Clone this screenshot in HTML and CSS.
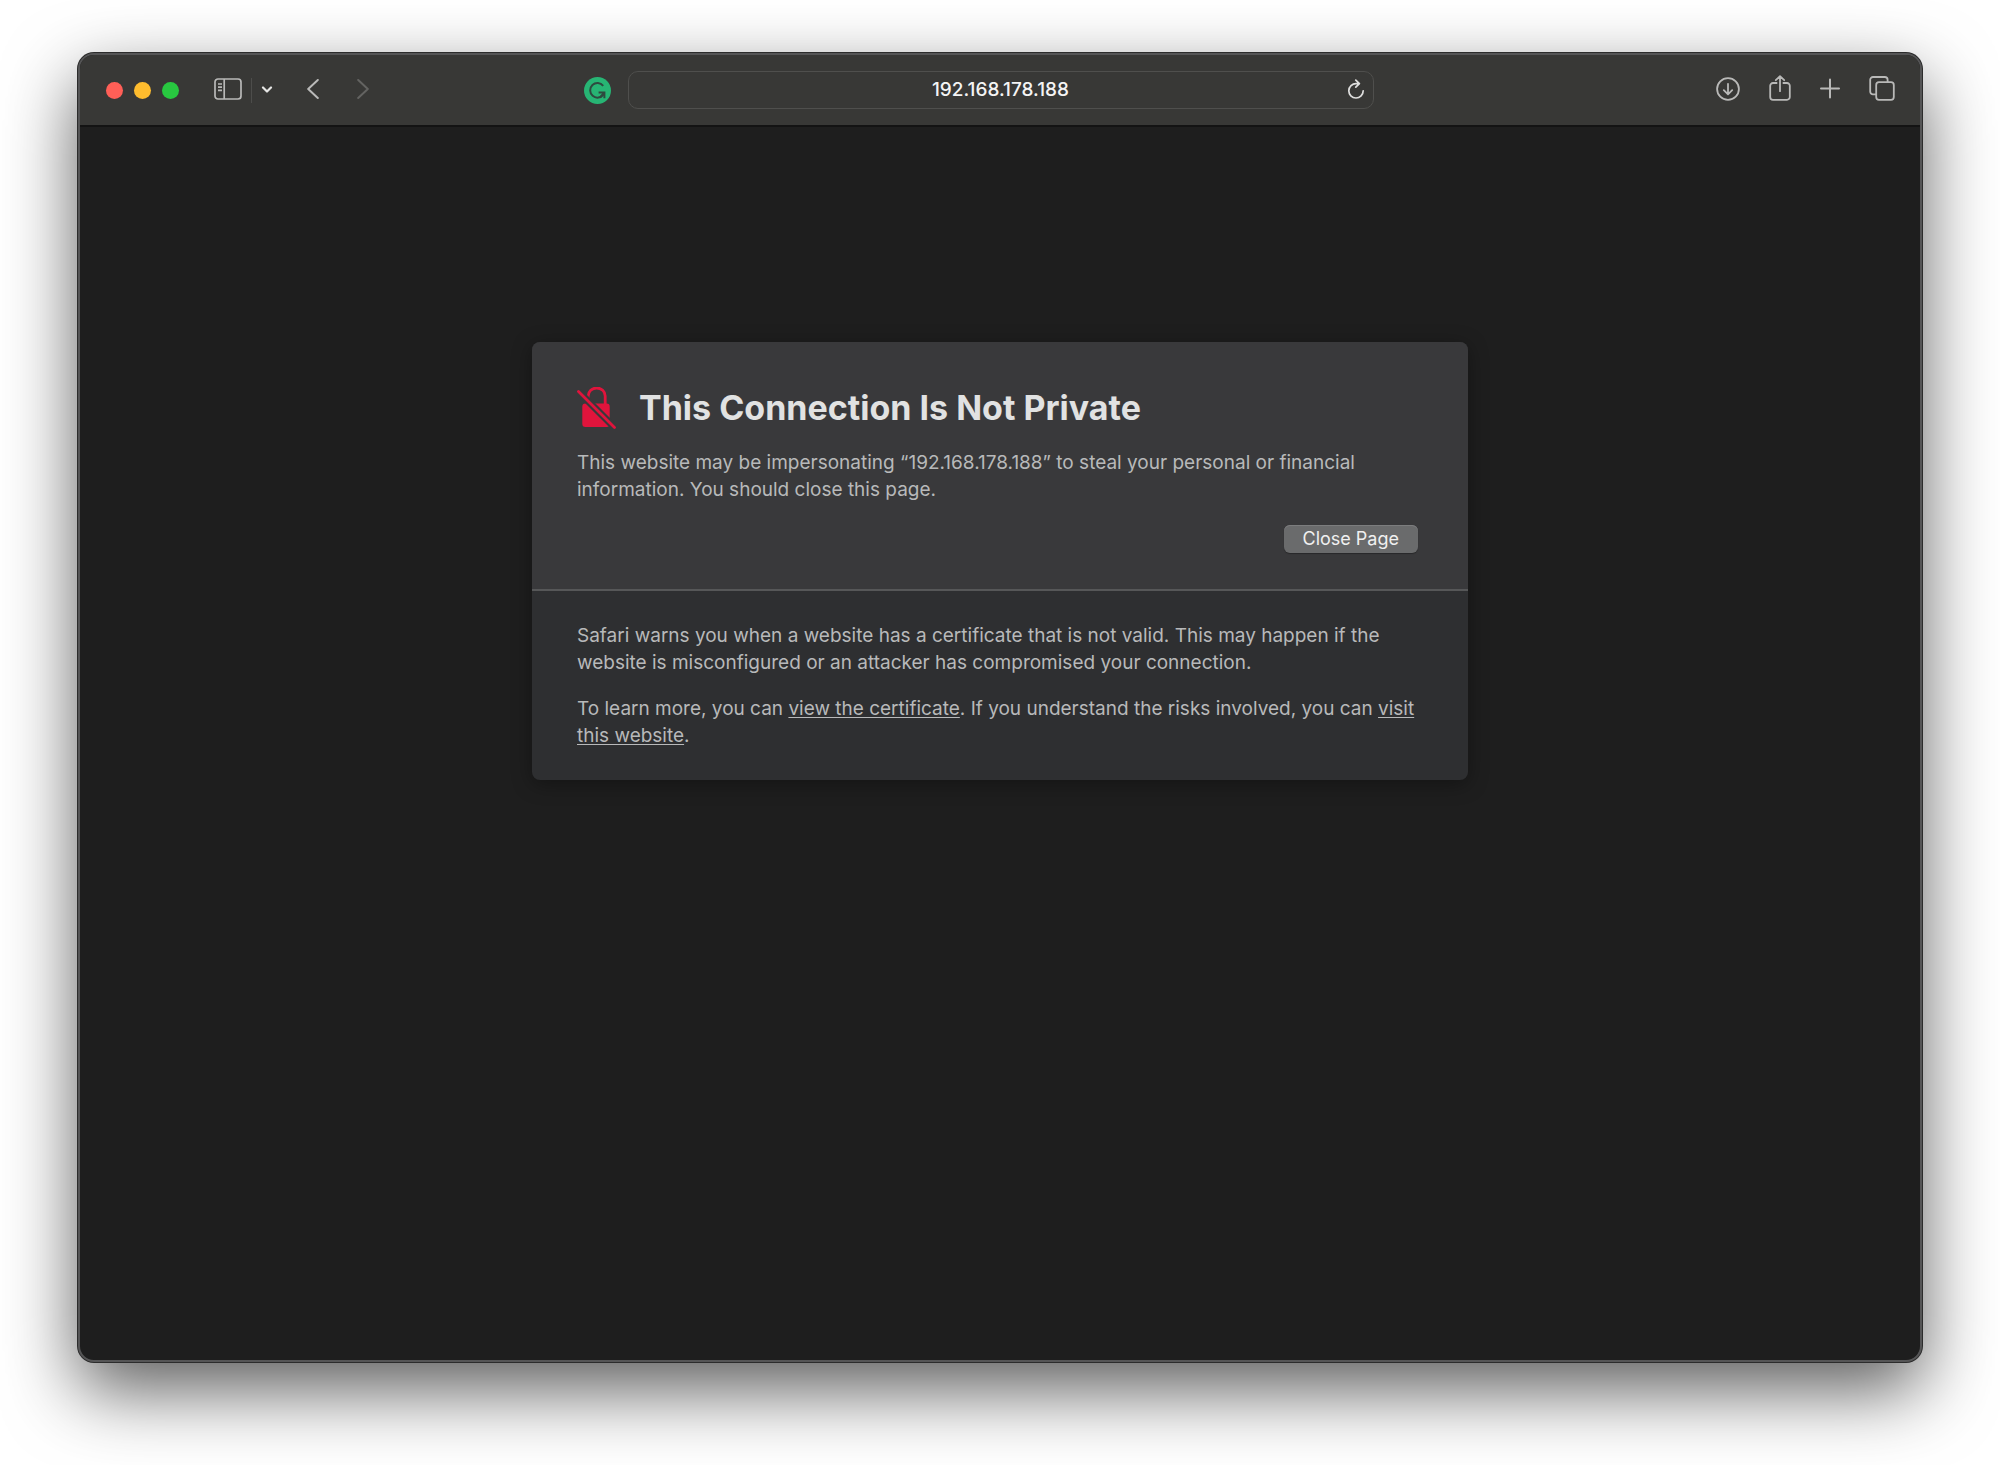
FILE: index.html
```
<!DOCTYPE html>
<html lang="en">
<head>
<meta charset="utf-8">
<meta name="viewport" content="width=device-width, initial-scale=1">
<title>This Connection Is Not Private</title>
<link rel="stylesheet" href="styles.css">
</head>
<body>
<div class="window">
  <header class="toolbar">
    <div class="group group-left">
      <div class="lights">
        <button class="light light-close" type="button" aria-label="Close"></button>
        <button class="light light-min" type="button" aria-label="Minimize"></button>
        <button class="light light-zoom" type="button" aria-label="Zoom"></button>
      </div>
      <button class="tool" type="button" aria-label="Sidebar">
        <svg width="28" height="24" viewBox="0 0 28 24" fill="none" stroke="currentColor" stroke-width="1.7"><rect x="1" y="1" width="26" height="20" rx="3"/><path d="M10.2 1v20M4 6h4M4 9.2h4M4 12.4h4" /></svg>
      </button>
      <span class="divider"></span>
      <button class="tool tool-menu" type="button" aria-label="Tab groups">
        <svg width="12" height="8" viewBox="0 0 12 8" fill="none" stroke="currentColor" stroke-width="2.2" stroke-linecap="round" stroke-linejoin="round"><path d="M2 1.500l4 4 4-4"/></svg>
      </button>
      <button class="tool tool-back" type="button" aria-label="Back">
        <svg width="12" height="22" viewBox="0 0 12 22" fill="none" stroke="currentColor" stroke-width="2" stroke-linecap="round" stroke-linejoin="round"><path d="M10.800 1L1.200 10l9.600 9"/></svg>
      </button>
      <button class="tool tool-forward" type="button" aria-label="Forward" disabled>
        <svg width="12" height="22" viewBox="0 0 12 22" fill="none" stroke="currentColor" stroke-width="2" stroke-linecap="round" stroke-linejoin="round"><path d="M1.200 1l9.600 9-9.600 9"/></svg>
      </button>
      <button class="tool tool-extension" type="button" aria-label="Grammarly">
        <svg width="27" height="27" viewBox="0 0 27 27" fill="none"><circle cx="13.500" cy="13.500" r="13.500" fill="#27b574"/><path d="M19.200 8.800A7.300 7.300 0 1 0 19.400 17.600" stroke="#2e4a3f" stroke-width="2"/><path d="M14.600 15.400h5.800v5.800M20.200 15.600l-3.600 4" stroke="#2e4a3f" stroke-width="2"/></svg>
      </button>
    </div>
    <div class="address">
      <input class="address-input" type="text" value="192.168.178.188" aria-label="Address">
      <button class="tool tool-reload" type="button" aria-label="Reload">
        <svg width="18" height="22" viewBox="0 0 18 22" fill="none" stroke="currentColor" stroke-width="1.700" stroke-linecap="round" stroke-linejoin="round"><path d="M11.600 4.600H9.200A7.200 7.200 0 1 0 16.200 11.800M8.800 1.200l3.600 3.400-3.600 3.600"/></svg>
      </button>
    </div>
    <div class="group group-right">
      <button class="tool" type="button" aria-label="Downloads">
        <svg width="24" height="30" viewBox="0 0 24 30" fill="none" stroke="currentColor" stroke-width="1.800" stroke-linecap="round" stroke-linejoin="round"><circle cx="12" cy="14" r="10.900"/><path d="M12 8.800v10.400M7.800 15.200l4.200 4.100 4.200-4.100"/></svg>
      </button>
      <button class="tool" type="button" aria-label="Share">
        <svg width="22" height="30" viewBox="0 0 22 30" fill="none" stroke="currentColor" stroke-width="1.800" stroke-linecap="round" stroke-linejoin="round"><path d="M7.600 8H4a2.800 2.800 0 0 0-2.800 2.800V22A2.800 2.800 0 0 0 4 24.800h14a2.800 2.800 0 0 0 2.800-2.800V10.800A2.800 2.800 0 0 0 18 8h-3.600M11 16.200V1.400M6.800 5.200L11 1.200l4.200 4"/></svg>
      </button>
      <button class="tool" type="button" aria-label="New tab">
        <svg width="20" height="30" viewBox="0 0 20 30" fill="none" stroke="currentColor" stroke-width="2" stroke-linecap="round"><path d="M10 4.500v18M1 13.500h18"/></svg>
      </button>
      <button class="tool" type="button" aria-label="Tab overview">
        <svg width="26" height="30" viewBox="0 0 26 30" fill="none" stroke="currentColor" stroke-width="1.800" stroke-linejoin="round"><rect x="7.200" y="7.200" width="17.600" height="17.600" rx="2.800"/><path d="M7.200 19.400H4A2.800 2.800 0 0 1 1.200 16.600V4.800A2.800 2.800 0 0 1 4 2h11.800a2.800 2.800 0 0 1 2.800 2.800v2.400"/></svg>
      </button>
    </div>
  </header>
  <main class="page">
    <article class="card">
      <section class="warning">
        <div class="title-row">
          <svg class="lock" width="40" height="42" viewBox="0 0 40 42" aria-hidden="true"><path d="M11.200 14v-5a8.500 8 0 0 1 17 0V18" fill="none" stroke="#e0143c" stroke-width="2.800"/><rect x="5.300" y="16.500" width="27.400" height="23.500" rx="3" fill="#e0143c"/><path d="M1.500 4.500l36 36" stroke="#39393b" stroke-width="7"/><path d="M1.500 4.500l36 36" stroke="#e0143c" stroke-width="2.800" stroke-linecap="round"/></svg>
          <h1 class="title">This Connection Is Not Private</h1>
        </div>
        <p class="text">This website may be impersonating “192.168.178.188” to steal your personal or financial information. You should close this page.</p>
        <div class="actions"><button class="close-page" type="button">Close Page</button></div>
      </section>
      <section class="details">
        <p class="text">Safari warns you when a website has a certificate that is not valid. This may happen if the website is misconfigured or an attacker has compromised your connection.</p>
        <p class="text">To learn more, you can <a class="link" href="#certificate">view the certificate</a>. If you understand the risks involved, you can <a class="link" href="#visit">visit this website</a>.</p>
      </section>
    </article>
  </main>
</div>
</body>
</html>
```
FILE: styles.css
```
* {
  box-sizing: border-box;
}

body {
  margin: 0;
  min-height: 100vh;
  padding: 53px 78px 103px;
  display: flex;
  background: #fff;
  font-family: Inter, "Liberation Sans", sans-serif;
}

.window {
  flex: 1;
  display: flex;
  flex-direction: column;
  overflow: hidden;
  border: 2px solid #555556;
  border-radius: 16px;
  background: #1e1e1e;
  box-shadow: 0 0 0 1px #2c2c2c, 0 28px 72px rgba(0, 0, 0, 0.64);
}

.toolbar {
  display: grid;
  grid-template-columns: 1fr minmax(0, 746px) 1fr;
  align-items: center;
  height: 72px;
  padding: 0 25px 0 26px;
  background: #383836;
  border-bottom: 2px solid #131313;
}

.group {
  display: flex;
  align-items: center;
}

.group-right {
  justify-content: flex-end;
  gap: 29px;
}

.lights {
  display: flex;
  gap: 11px;
  margin-right: 35px;
}

.light {
  width: 17px;
  height: 17px;
  padding: 0;
  border: 0;
  border-radius: 50%;
}

.light-close {
  background: #ff5f57;
}

.light-min {
  background: #febc2e;
}

.light-zoom {
  background: #28c840;
}

.tool {
  display: flex;
  padding: 0;
  border: 0;
  background: none;
  color: #b9b9b8;
}

.divider {
  width: 1px;
  height: 25px;
  margin: 0 9px;
  background: #4d4d4b;
}

.tool-menu {
  color: #e6e6e5;
}

.tool-back {
  margin-left: 34px;
}

.tool-forward {
  margin-left: 38px;
  color: #636361;
}

.tool-extension {
  margin: 0 17px 0 auto;
}

.address {
  display: flex;
  align-items: center;
  height: 38px;
  padding: 0 8px 0 34px;
  border: 1px solid #4f4f4d;
  border-radius: 10px;
}

.address-input {
  flex: 1;
  min-width: 0;
  padding: 0;
  border: 0;
  outline: 0;
  background: none;
  color: #f4f4f4;
  font: 500 19px/24px Inter, "Liberation Sans", sans-serif;
  text-align: center;
}

.tool-reload {
  margin-left: 8px;
  color: #dededd;
}

.page {
  flex: 1;
  padding: 215px 24px 48px;
}

.card {
  max-width: 936px;
  margin: 0 auto;
  overflow: hidden;
  border-radius: 8px;
  background: #2e2f31;
  box-shadow: 0 4px 20px rgba(0, 0, 0, 0.35);
}

.warning {
  padding: 45px 45px 36px;
  background: #39393b;
  border-bottom: 2px solid #565758;
}

.title-row {
  display: flex;
  align-items: center;
  gap: 22px;
  margin-bottom: 20px;
}

.lock {
  flex: none;
}

.title {
  margin: 0;
  color: #e1e2e2;
  font-size: 34px;
  font-weight: 700;
  line-height: 42px;
}

.text {
  margin: 0;
  color: #b8b9ba;
  font-size: 19px;
  line-height: 27px;
}

.actions {
  display: flex;
  justify-content: flex-end;
  margin-top: 22px;
  padding-right: 5px;
}

.close-page {
  height: 28px;
  padding: 0 19px;
  border: 0;
  border-radius: 6px;
  background: #6a6b6c;
  box-shadow: inset 0 1px #7c7d7e, 0 1px 1px rgba(0, 0, 0, 0.3);
  color: #f0f0f0;
  font: 400 18px/28px Inter, "Liberation Sans", sans-serif;
}

.details {
  display: flex;
  flex-direction: column;
  gap: 19px;
  padding: 31px 45px;
}

.link {
  color: inherit;
  text-underline-offset: 2px;
}
```
